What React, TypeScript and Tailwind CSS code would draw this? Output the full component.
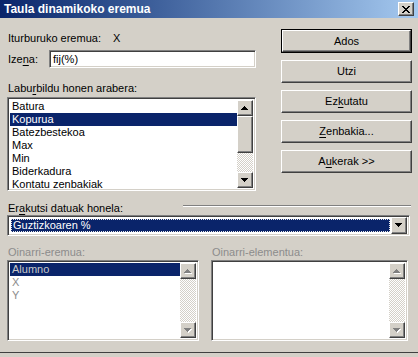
import React from 'react';

// classic win2000 bevels
const raised =
  'border border-t-white border-l-white border-r-[#404040] border-b-[#404040] shadow-[inset_-1px_-1px_#808080,inset_1px_1px_#d4d0c8]';
const sunken =
  'border border-t-[#808080] border-l-[#808080] border-r-white border-b-white shadow-[inset_1px_1px_#404040,inset_-1px_-1px_#d4d0c8]';
const checker = 'bg-[repeating-conic-gradient(#d4d0c8_0%_25%,#ffffff_0%_50%)] bg-[length:2px_2px]';

function Arrow({ up, disabled }: { up?: boolean; disabled?: boolean }) {
  const rows = up ? [3, 2, 1, 0] : [0, 1, 2, 3];
  return (
    <svg width="8" height="5" viewBox="0 0 8 5" shapeRendering="crispEdges">
      {disabled &&
        rows.map((x, i) => <rect key={'s' + i} x={x + 1} y={i + 1} width={7 - 2 * x} height={1} fill="#ffffff" />)}
      {rows.map((x, i) => (
        <rect key={i} x={x} y={i} width={7 - 2 * x} height={1} fill={disabled ? '#808080' : '#000000'} />
      ))}
    </svg>
  );
}

function ScrollBtn({ up, disabled, h = 16 }: { up?: boolean; disabled?: boolean; h?: number }) {
  return (
    <div className={`w-[16px] ${h === 16 ? 'h-[16px]' : 'h-[17px]'} shrink-0 bg-[#d4d0c8] flex items-center justify-center ${raised}`}>
      <Arrow up={up} disabled={disabled} />
    </div>
  );
}

function ScrollBar({ thumb, disabled }: { thumb?: boolean; disabled?: boolean }) {
  return (
    <div className="w-[16px] flex flex-col shrink-0">
      <ScrollBtn up disabled={disabled} />
      {thumb && <div className={`h-[37px] shrink-0 bg-[#d4d0c8] ${raised}`} />}
      <div className={`flex-1 ${checker}`} />
      <ScrollBtn disabled={disabled} />
    </div>
  );
}

function Btn({ children, def }: { children: React.ReactNode; def?: boolean }) {
  const inner = (
    <div className={`h-full w-full bg-[#d4d0c8] flex items-center justify-center ${raised}`}>{children}</div>
  );
  return def ? (
    <div className="h-[24px] border border-black">{inner}</div>
  ) : (
    <div className="h-[23px]">{inner}</div>
  );
}

const U = ({ c }: { c: string }) => <span className="underline underline-offset-[2px]">{c}</span>;

const summary = ['Batura', 'Kopurua', 'Batezbestekoa', 'Max', 'Min', 'Biderkadura', 'Kontatu zenbakiak'];

export default function App() {
  return (
    <div className="w-[418px] h-[357px] bg-[#d4d0c8] text-black text-[11px] leading-[13px] font-['Liberation_Sans',Arial,sans-serif] flex flex-col overflow-hidden">
      {/* title bar */}
      <div className="h-[18px] shrink-0 flex items-center justify-between pl-[4px] pr-[4px] bg-gradient-to-r from-[#0a246a] to-[#a6caf0]">
        <span className="text-white font-bold text-[12px] leading-[14px]">Taula dinamikoko eremua</span>
        <div className={`w-[16px] h-[14px] bg-[#d4d0c8] flex items-center justify-center ${raised}`}>
          <svg width="8" height="7" viewBox="0 0 8 7" shapeRendering="crispEdges">
            <path d="M0 0h2v1H0zM6 0h2v1H6zM1 1h2v1H1zM5 1h2v1H5zM2 2h4v1H2zM3 3h2v1H3zM2 4h4v1H2zM1 5h2v1H1zM5 5h2v1H5zM0 6h2v1H0zM6 6h2v1H6z" fill="#000" />
          </svg>
        </div>
      </div>

      {/* top section */}
      <div className="flex">
        <div className="flex flex-col w-[249px] ml-[7px]">
          <div className="flex mt-[14px] h-[13px] pl-[1px]">
            <span className="w-[105px]">Iturburuko eremua:</span>
            <span>X</span>
          </div>
          <div className="flex items-center mt-[5px] h-[18px] pl-[1px]">
            <span className="w-[41px]">
              Ize<U c="n" />a:
            </span>
            <div className={`flex-1 h-[18px] bg-white flex items-center pl-[3px] ${sunken}`}>fij(%)</div>
          </div>
          <div className="mt-[14px] h-[13px] pl-[1px]">
            Labu<U c="r" />bildu honen arabera:
          </div>
          <div className={`mt-[2px] h-[94px] bg-white flex p-[2px] ${sunken}`}>
            <div className="flex-1 flex flex-col">
              {summary.map((s, i) => (
                <div
                  key={s}
                  className={`h-[13px] pl-[2px] whitespace-nowrap ${i === 1 ? 'bg-[#0a246a] text-white' : ''}`}
                >
                  {s}
                </div>
              ))}
            </div>
            <ScrollBar thumb />
          </div>
        </div>

        <div className="flex flex-col gap-[7px] w-[131px] ml-[25px] mt-[11px]">
          <Btn def>Ados</Btn>
          <Btn>Utzi</Btn>
          <Btn>
            Ez<U c="k" />utatu
          </Btn>
          <Btn>
            <U c="Z" />enbakia...
          </Btn>
          <Btn>
            A<U c="u" />kerak &gt;&gt;
          </Btn>
        </div>
      </div>

      {/* show data as */}
      <div className="flex mt-[11px] pl-[8px] pr-[7px] h-[13px]">
        <span>
          Er<U c="a" />kutsi datuak honela:
        </span>
        <div className="flex-1 ml-[60px] mt-[3px] h-[2px] border-t border-t-[#808080] border-b border-b-white" />
      </div>
      <div className={`ml-[7px] w-[403px] h-[21px] bg-white flex items-center p-[2px] ${sunken}`}>
        <div className="flex-1 h-full p-[1px]">
          <div className="h-full bg-[#0a246a] text-white border border-dotted border-[#e8e8e8] flex items-center pl-[1px]">
            Guztizkoaren %
          </div>
        </div>
        <ScrollBtn h={17} />
      </div>

      {/* base field / item */}
      <div className="flex mt-[10px] h-[13px] text-[#8c8c8c]">
        <span className="ml-[8px] w-[204px]">Oinarri-eremua:</span>
        <span>Oinarri-elementua:</span>
      </div>
      <div className="flex mt-[1px]">
        <div className={`ml-[7px] w-[192px] h-[81px] bg-white flex p-[2px] ${sunken}`}>
          <div className="flex-1 flex flex-col">
            <div className="h-[13px] pl-[2px] bg-[#0a246a] text-[#c8c8c8]">Alumno</div>
            <div className="h-[13px] pl-[2px] text-[#8c8c8c]">X</div>
            <div className="h-[13px] pl-[2px] text-[#8c8c8c]">Y</div>
          </div>
          <ScrollBar disabled />
        </div>
        <div className={`ml-[12px] w-[197px] h-[81px] bg-white flex p-[2px] ${sunken}`}>
          <div className="flex-1" />
          <ScrollBar disabled />
        </div>
      </div>

      <div className="mt-auto mb-[4px] h-[1px] bg-[#404040]" />
    </div>
  );
}
